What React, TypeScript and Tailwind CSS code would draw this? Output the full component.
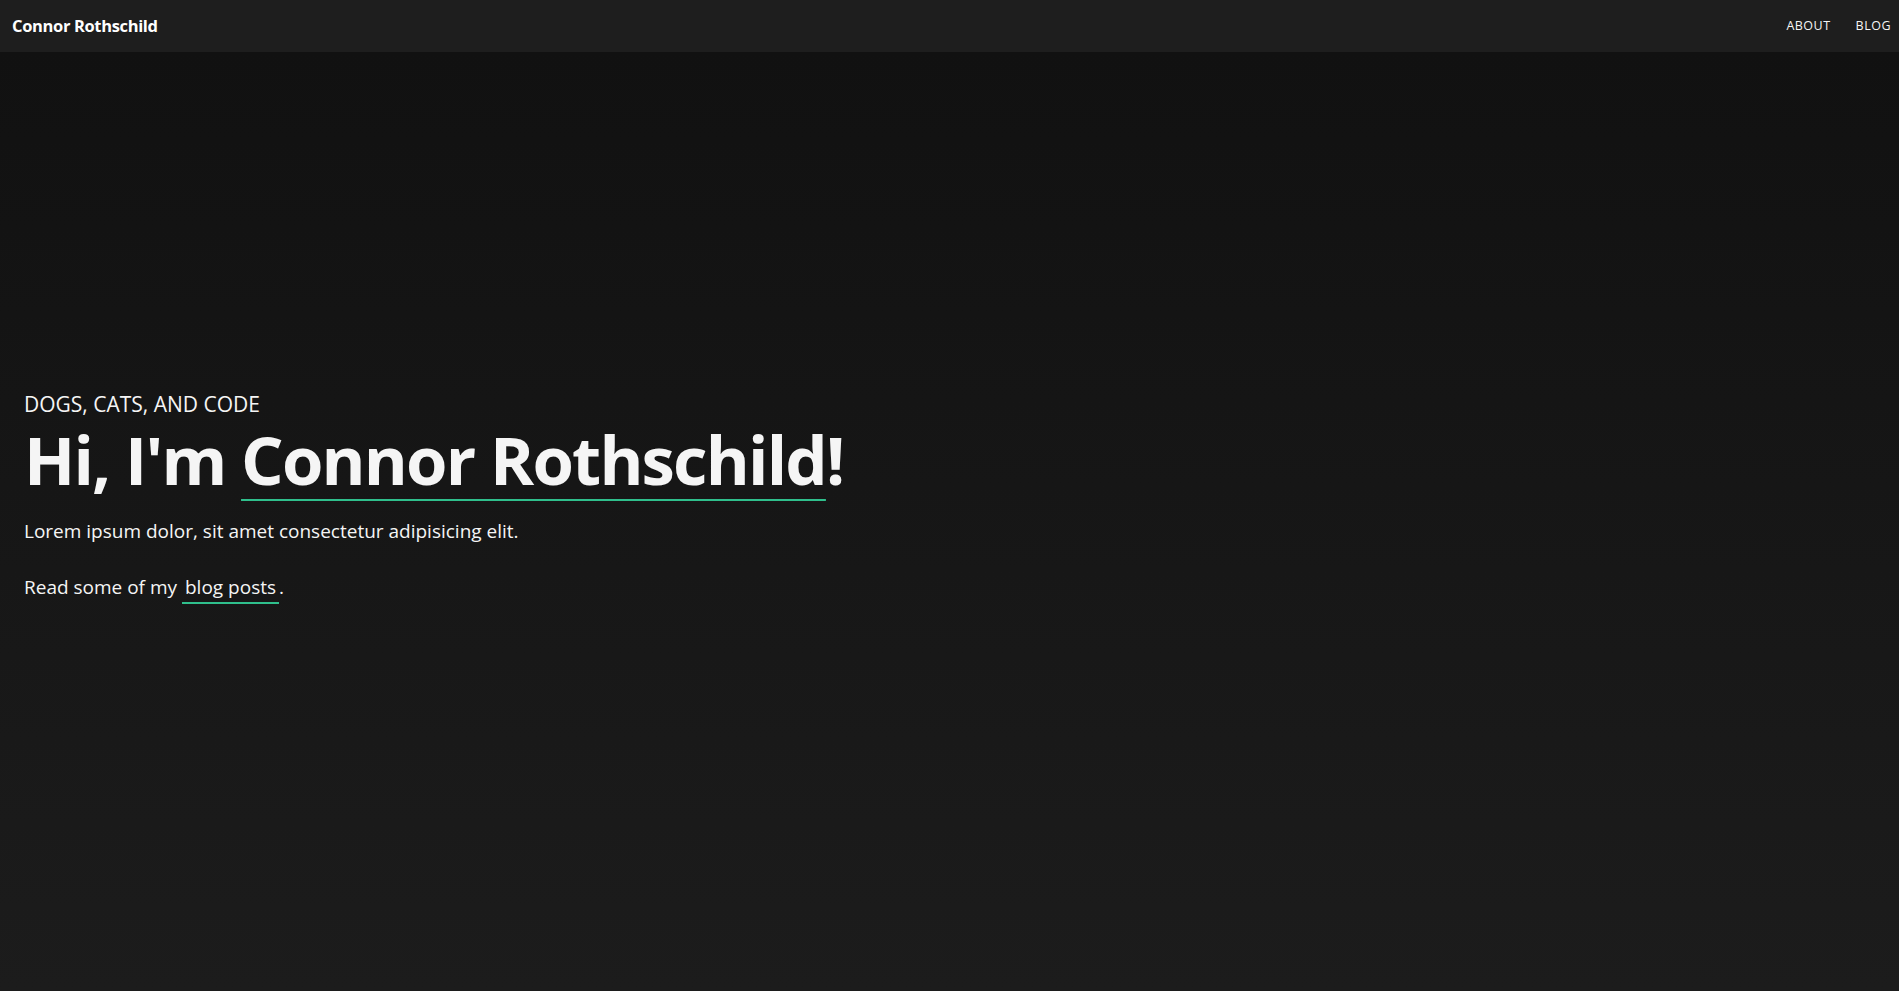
import React from 'react';

const App: React.FC = () => {
  return (
    <div className="min-h-screen flex flex-col bg-[#1c1c1c] text-[#f5f5f5] font-['Open_Sans','Noto_Sans',sans-serif]">
      <nav className="h-[52px] shrink-0 bg-[#1e1e1e] flex items-center justify-between pl-3 pr-2">
        <a href="#" className="text-[16.5px] font-bold tracking-[-0.35px] text-white">
          Connor Rothschild
        </a>
        <div className="flex items-center gap-[25px] text-[12.5px] uppercase tracking-[0.5px]">
          <a href="#">About</a>
          <a href="#">Blog</a>
        </div>
      </nav>

      <main className="flex-1 bg-linear-to-b from-[#111111] to-[#1c1c1c] flex flex-col justify-center px-6 pb-[49px]">
        <p className="text-[21px] uppercase leading-[1.3]">Dogs, cats, and code</p>
        <h1 className="text-[67px] font-bold leading-[1.2] tracking-[-1.8px] mb-[17px]">
          Hi, I'm{' '}
          <span className="underline decoration-[#2fbf8c] decoration-2 underline-offset-[14px]">
            Connor Rothschild
          </span>
          !
        </h1>
        <p className="text-[19px] leading-[1.6] mb-[26px]">
          Lorem ipsum dolor, sit amet consectetur adipisicing elit.
        </p>
        <p className="text-[19px] leading-[1.6]">
          Read some of my{' '}
          <a href="#" className="px-[3px] pb-[2px] border-b-2 border-[#2fbf8c]">
            blog posts
          </a>
          .
        </p>
      </main>
    </div>
  );
};

export default App;
